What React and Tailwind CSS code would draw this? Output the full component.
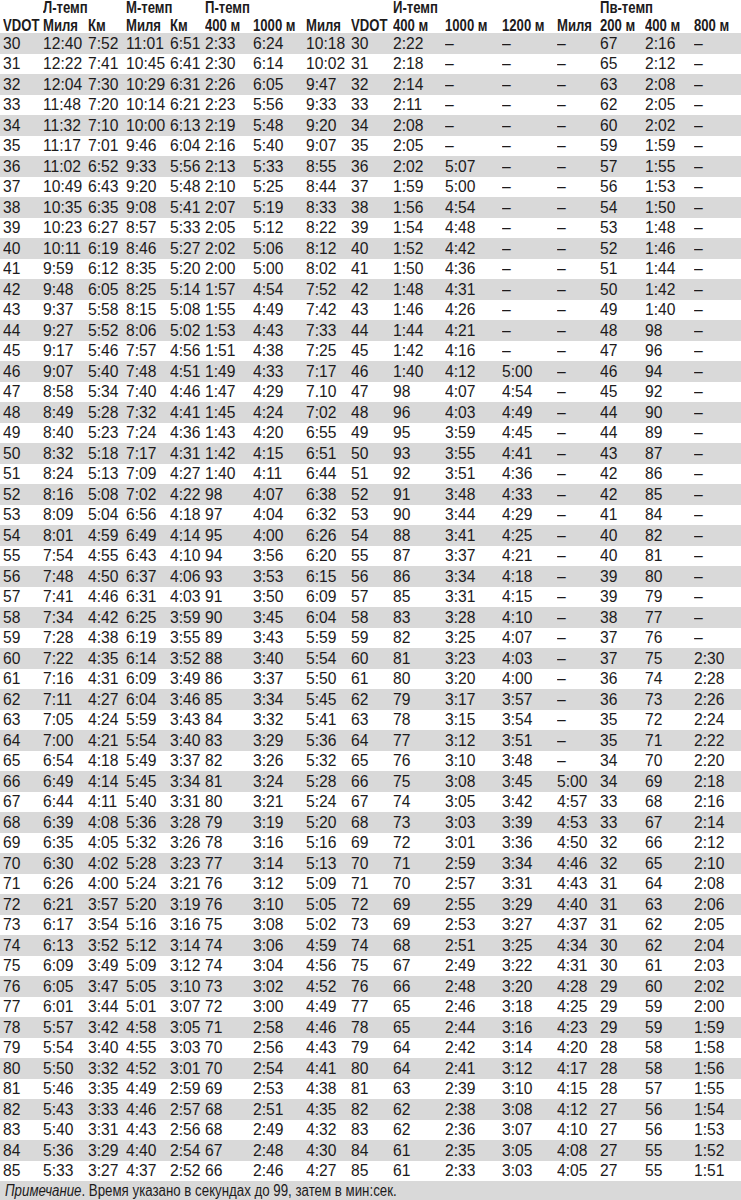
const rows = `30 12:40 7:52 11:01 6:51 2:33 6:24 10:18 30 2:22 – – – 67 2:16 –
31 12:22 7:41 10:45 6:41 2:30 6:14 10:02 31 2:18 – – – 65 2:12 –
32 12:04 7:30 10:29 6:31 2:26 6:05 9:47 32 2:14 – – – 63 2:08 –
33 11:48 7:20 10:14 6:21 2:23 5:56 9:33 33 2:11 – – – 62 2:05 –
34 11:32 7:10 10:00 6:13 2:19 5:48 9:20 34 2:08 – – – 60 2:02 –
35 11:17 7:01 9:46 6:04 2:16 5:40 9:07 35 2:05 – – – 59 1:59 –
36 11:02 6:52 9:33 5:56 2:13 5:33 8:55 36 2:02 5:07 – – 57 1:55 –
37 10:49 6:43 9:20 5:48 2:10 5:25 8:44 37 1:59 5:00 – – 56 1:53 –
38 10:35 6:35 9:08 5:41 2:07 5:19 8:33 38 1:56 4:54 – – 54 1:50 –
39 10:23 6:27 8:57 5:33 2:05 5:12 8:22 39 1:54 4:48 – – 53 1:48 –
40 10:11 6:19 8:46 5:27 2:02 5:06 8:12 40 1:52 4:42 – – 52 1:46 –
41 9:59 6:12 8:35 5:20 2:00 5:00 8:02 41 1:50 4:36 – – 51 1:44 –
42 9:48 6:05 8:25 5:14 1:57 4:54 7:52 42 1:48 4:31 – – 50 1:42 –
43 9:37 5:58 8:15 5:08 1:55 4:49 7:42 43 1:46 4:26 – – 49 1:40 –
44 9:27 5:52 8:06 5:02 1:53 4:43 7:33 44 1:44 4:21 – – 48 98 –
45 9:17 5:46 7:57 4:56 1:51 4:38 7:25 45 1:42 4:16 – – 47 96 –
46 9:07 5:40 7:48 4:51 1:49 4:33 7:17 46 1:40 4:12 5:00 – 46 94 –
47 8:58 5:34 7:40 4:46 1:47 4:29 7.10 47 98 4:07 4:54 – 45 92 –
48 8:49 5:28 7:32 4:41 1:45 4:24 7:02 48 96 4:03 4:49 – 44 90 –
49 8:40 5:23 7:24 4:36 1:43 4:20 6:55 49 95 3:59 4:45 – 44 89 –
50 8:32 5:18 7:17 4:31 1:42 4:15 6:51 50 93 3:55 4:41 – 43 87 –
51 8:24 5:13 7:09 4:27 1:40 4:11 6:44 51 92 3:51 4:36 – 42 86 –
52 8:16 5:08 7:02 4:22 98 4:07 6:38 52 91 3:48 4:33 – 42 85 –
53 8:09 5:04 6:56 4:18 97 4:04 6:32 53 90 3:44 4:29 – 41 84 –
54 8:01 4:59 6:49 4:14 95 4:00 6:26 54 88 3:41 4:25 – 40 82 –
55 7:54 4:55 6:43 4:10 94 3:56 6:20 55 87 3:37 4:21 – 40 81 –
56 7:48 4:50 6:37 4:06 93 3:53 6:15 56 86 3:34 4:18 – 39 80 –
57 7:41 4:46 6:31 4:03 91 3:50 6:09 57 85 3:31 4:15 – 39 79 –
58 7:34 4:42 6:25 3:59 90 3:45 6:04 58 83 3:28 4:10 – 38 77 –
59 7:28 4:38 6:19 3:55 89 3:43 5:59 59 82 3:25 4:07 – 37 76 –
60 7:22 4:35 6:14 3:52 88 3:40 5:54 60 81 3:23 4:03 – 37 75 2:30
61 7:16 4:31 6:09 3:49 86 3:37 5:50 61 80 3:20 4:00 – 36 74 2:28
62 7:11 4:27 6:04 3:46 85 3:34 5:45 62 79 3:17 3:57 – 36 73 2:26
63 7:05 4:24 5:59 3:43 84 3:32 5:41 63 78 3:15 3:54 – 35 72 2:24
64 7:00 4:21 5:54 3:40 83 3:29 5:36 64 77 3:12 3:51 – 35 71 2:22
65 6:54 4:18 5:49 3:37 82 3:26 5:32 65 76 3:10 3:48 – 34 70 2:20
66 6:49 4:14 5:45 3:34 81 3:24 5:28 66 75 3:08 3:45 5:00 34 69 2:18
67 6:44 4:11 5:40 3:31 80 3:21 5:24 67 74 3:05 3:42 4:57 33 68 2:16
68 6:39 4:08 5:36 3:28 79 3:19 5:20 68 73 3:03 3:39 4:53 33 67 2:14
69 6:35 4:05 5:32 3:26 78 3:16 5:16 69 72 3:01 3:36 4:50 32 66 2:12
70 6:30 4:02 5:28 3:23 77 3:14 5:13 70 71 2:59 3:34 4:46 32 65 2:10
71 6:26 4:00 5:24 3:21 76 3:12 5:09 71 70 2:57 3:31 4:43 31 64 2:08
72 6:21 3:57 5:20 3:19 76 3:10 5:05 72 69 2:55 3:29 4:40 31 63 2:06
73 6:17 3:54 5:16 3:16 75 3:08 5:02 73 69 2:53 3:27 4:37 31 62 2:05
74 6:13 3:52 5:12 3:14 74 3:06 4:59 74 68 2:51 3:25 4:34 30 62 2:04
75 6:09 3:49 5:09 3:12 74 3:04 4:56 75 67 2:49 3:22 4:31 30 61 2:03
76 6:05 3:47 5:05 3:10 73 3:02 4:52 76 66 2:48 3:20 4:28 29 60 2:02
77 6:01 3:44 5:01 3:07 72 3:00 4:49 77 65 2:46 3:18 4:25 29 59 2:00
78 5:57 3:42 4:58 3:05 71 2:58 4:46 78 65 2:44 3:16 4:23 29 59 1:59
79 5:54 3:40 4:55 3:03 70 2:56 4:43 79 64 2:42 3:14 4:20 28 58 1:58
80 5:50 3:32 4:52 3:01 70 2:54 4:41 80 64 2:41 3:12 4:17 28 58 1:56
81 5:46 3:35 4:49 2:59 69 2:53 4:38 81 63 2:39 3:10 4:15 28 57 1:55
82 5:43 3:33 4:46 2:57 68 2:51 4:35 82 62 2:38 3:08 4:12 27 56 1:54
83 5:40 3:31 4:43 2:56 68 2:49 4:32 83 62 2:36 3:07 4:10 27 56 1:53
84 5:36 3:29 4:40 2:54 67 2:48 4:30 84 61 2:35 3:05 4:08 27 55 1:52
85 5:33 3:27 4:37 2:52 66 2:46 4:27 85 61 2:33 3:03 4:05 27 55 1:51`
  .split('\n')
  .map((line) => line.trim().split(' '));

const cols =
  'grid grid-cols-[40px_45px_38px_44px_35px_48px_53px_45px_42px_52px_57px_55px_43px_45px_49px_47px] pl-[3px]';

const groups = ['', 'Л-темп', '', 'М-темп', '', 'П-темп', '', '', '', 'И-темп', '', '', '', 'Пв-темп', '', ''];
const heads = ['VDOT', 'Миля', 'Км', 'Миля', 'Км', '400 м', '1000 м', 'Миля', 'VDOT', '400 м', '1000 м', '1200 м', 'Миля', '200 м', '400 м', '800 м'];

export default function App() {
  return (
    <div className="w-[741px] bg-white text-[#1d1b1c] font-['Liberation_Sans',Arial,sans-serif]">
      <div className={`${cols} h-[16px] items-center text-[16px] font-bold leading-none`}>
        {groups.map((g, i) => (
          <div key={i} className="whitespace-nowrap origin-left scale-x-[0.82]">{g}</div>
        ))}
      </div>
      <div className={`${cols} h-[17px] pt-[2px] items-center text-[16px] font-bold leading-none`}>
        {heads.map((h, i) => (
          <div key={i} className="whitespace-nowrap origin-left scale-x-[0.82]">{h}</div>
        ))}
      </div>
      {rows.map((r, idx) => (
        <div
          key={r[0]}
          className={`${cols} h-[20.5px] items-center text-[17px] leading-none ${idx % 2 === 0 ? 'bg-[#d9d9d9]' : ''}`}
        >
          {r.map((v, i) => (
            <div key={i} className="whitespace-nowrap origin-left scale-x-[0.92]">{v}</div>
          ))}
        </div>
      ))}
      <div className="h-[19px] bg-[#d9d9d9] pl-[5px] flex items-center text-[16px] leading-none">
        <span className="whitespace-nowrap origin-left scale-x-[0.83]">
          <i>Примечание</i>. Время указано в секундах до 99, затем в мин:сек.
        </span>
      </div>
    </div>
  );
}
